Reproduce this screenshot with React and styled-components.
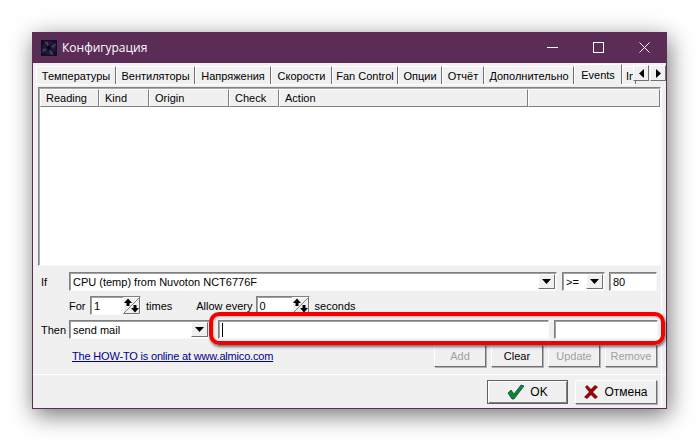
import styled, { createGlobalStyle } from 'styled-components';

const GlobalStyle = createGlobalStyle`
  html, body {
    margin: 0;
    padding: 0;
    background: #fff;
    overflow: hidden;
  }
  #root {
    width: 700px;
    height: 442px;
  }
  * {
    box-sizing: border-box;
  }
`;

const Page = styled.div`
  width: 700px;
  height: 442px;
  padding: 32px 33px 33px 32px;
  font-family: 'Liberation Sans', Arial, sans-serif;
  font-size: 11px;
  color: #000;
`;

const Window = styled.div`
  position: relative;
  width: 635px;
  height: 377px;
  background: #f0f0f0;
  border: 1px solid #5a2c56;
  border-top: none;
  box-shadow: 2px 6px 22px rgba(0, 0, 0, 0.55);
  display: flex;
  flex-direction: column;
`;

const TitleBar = styled.div`
  height: 31px;
  margin: 0 -1px;
  background: #5a2c56;
  color: #fff;
  display: flex;
  align-items: center;
  padding-left: 9px;
  flex: none;
`;

const TitleText = styled.span`
  font-family: 'Open Sans', sans-serif;
  font-size: 12px;
  margin-left: 5px;
  flex: 1;
`;

const CaptionButton = styled.div`
  width: 46px;
  height: 31px;
  display: flex;
  align-items: center;
  justify-content: center;
`;

const TabStrip = styled.div`
  position: relative;
  height: 23px;
  margin-top: 1px;
  padding: 2px 0 0 3px;
  display: flex;
  flex: none;
  overflow: hidden;
`;

const Tab = styled.div`
  flex: none;
  width: ${(p) => p.$w}px;
  height: ${(p) => (p.$active ? 20 : 18)}px;
  margin-top: ${(p) => (p.$active ? -2 : 0)}px;
  padding-left: ${(p) => (p.$clipped ? 3 : 0)}px;
  display: flex;
  align-items: center;
  justify-content: ${(p) => (p.$clipped ? 'flex-start' : 'center')};
  white-space: nowrap;
  overflow: hidden;
  background: #f0f0f0;
  border-left: 1px solid #fff;
  border-top: 1px solid #fff;
  border-right: 1px solid #707070;
  box-shadow: ${(p) => (p.$active ? 'none' : '0 1px 0 #fff')};
`;

const ScrollPair = styled.div`
  position: absolute;
  right: 0;
  top: 1px;
  display: flex;
  gap: 1px;
`;

const ScrollButton = styled.div`
  width: 16px;
  height: 16px;
  background: #f0f0f0;
  border: 1px solid;
  border-color: #fff #707070 #707070 #fff;
  display: flex;
  align-items: center;
  justify-content: center;
`;

const Frame = styled.div`
  flex: 1;
  margin: 0 4px 0 5px;
  display: flex;
  flex-direction: column;
  min-height: 0;
  border-right: 1px solid #fff;
`;

const ListBox = styled.div`
  height: 179px;
  flex: none;
  background: #fff;
  border: 1px solid;
  border-color: #808080 #f8f8f8 #f8f8f8 #808080;
  box-shadow: inset 1px 1px 0 #a8a8a8;
  display: flex;
  flex-direction: column;
`;

const HeaderRow = styled.div`
  display: flex;
  height: 19px;
  padding: 1px 0 0 1px;
  flex: none;
`;

const HeaderCell = styled.div`
  flex: ${(p) => (p.$w ? `0 0 ${p.$w}px` : '1')};
  height: 18px;
  background: #f0f0f0;
  border: 1px solid;
  border-color: #fff #808080 #808080 #fff;
  padding-left: 5px;
  line-height: 16px;
`;

const Form = styled.div`
  flex: 1;
  display: flex;
  flex-direction: column;
  padding: 6px 4px 0 3px;
  min-height: 0;
`;

const Row = styled.div`
  display: flex;
  align-items: center;
  height: ${(p) => p.$h || 19}px;
  margin-top: ${(p) => p.$mt || 0}px;
  padding-left: ${(p) => p.$pl || 0}px;
  flex: none;
`;

const Label = styled.span`
  flex: none;
  width: ${(p) => (p.$w ? `${p.$w}px` : 'auto')};
  margin-left: ${(p) => p.$ml || 0}px;
  white-space: nowrap;
`;

const Field = styled.div`
  flex: none;
  width: ${(p) => p.$w}px;
  height: 19px;
  margin-left: ${(p) => p.$ml || 0}px;
  background: #fff;
  border: 1px solid;
  border-color: #808080 #f8f8f8 #f8f8f8 #808080;
  box-shadow: inset 1px 1px 0 #a0a0a0;
  padding-left: 3px;
  display: flex;
  align-items: center;
  justify-content: space-between;
  white-space: nowrap;
`;

const Arrow = styled.div`
  flex: none;
  width: 17px;
  height: 15px;
  margin-right: 1px;
  background: #f0f0f0;
  border: 1px solid;
  border-color: #fff #707070 #707070 #fff;
  display: flex;
  align-items: center;
  justify-content: center;
`;

const Spin = styled.svg`
  flex: none;
  display: block;
`;

const Caret = styled.span`
  width: 1px;
  height: 14px;
  background: #000;
`;

const Link = styled.a`
  color: #00008b;
  text-decoration: underline;
  letter-spacing: -0.18px;
  margin-left: 31px;
  flex: 1;
  white-space: nowrap;
`;

const ActionButton = styled.div`
  flex: none;
  width: 52px;
  height: 22px;
  margin-left: 5px;
  background: #f0f0f0;
  border: 1px solid;
  border-color: #fff #707070 #707070 #fff;
  box-shadow: 1px 1px 0 #b0b0b0;
  color: ${(p) => (p.disabled ? '#a0a0a0' : '#000')};
  display: flex;
  align-items: center;
  justify-content: center;
`;

const Footer = styled.div`
  height: 34px;
  flex: none;
  margin: 0 -5px 0 -5px;
  border-top: 1px solid #fff;
  padding: 5px 9px 0 0;
  display: flex;
  justify-content: flex-end;
  gap: 7px;
`;

const DialogButton = styled.div`
  width: ${(p) => p.$w}px;
  height: 24px;
  background: #f0f0f0;
  border: 1px solid;
  border-color: ${(p) => (p.$default ? '#606060' : '#fff #707070 #707070 #fff')};
  box-shadow: ${(p) => (p.$default ? 'inset 1px 1px 0 #fff, inset -1px -1px 0 #808080' : '1px 1px 0 #b0b0b0')};
  display: flex;
  align-items: center;
  justify-content: center;
  gap: 6px;
  font-size: 12px;
`;

const Highlight = styled.div`
  position: absolute;
  left: 176px;
  top: 280px;
  width: 456px;
  height: 33px;
  border: 4px solid #f40000;
  border-radius: 10px;
  box-shadow: 1px 2px 3px rgba(0, 0, 0, 0.55), inset 1px 1px 2px rgba(0, 0, 0, 0.25);
  pointer-events: none;
`;

const tabs = [
  ['Температуры', 80],
  ['Вентиляторы', 79],
  ['Напряжения', 76],
  ['Скорости', 61],
  ['Fan Control', 66],
  ['Опции', 44],
  ['Отчёт', 42],
  ['Дополнительно', 90],
];

const columns = [
  ['Reading', 59],
  ['Kind', 50],
  ['Origin', 80],
  ['Check', 50],
  ['Action', 249],
  ['', 0],
];

const FanIcon = () => (
  <svg width="16" height="16" viewBox="0 0 16 16">
    <rect width="16" height="16" fill="#100e22" />
    <circle cx="8" cy="8" r="7" fill="#1c1a38" />
    <path d="M8 8 L3 1 L7 2 Z M8 8 L15 3 L14 7 Z M8 8 L13 15 L9 14 Z M8 8 L1 13 L2 9 Z" fill="#4a3c5c" />
    <circle cx="8" cy="8" r="2.5" fill="#0a0a1c" />
  </svg>
);

const SpinIcon = () => (
  <Spin width="17" height="17" viewBox="0 0 17 17">
    <rect width="17" height="17" fill="#f0f0f0" />
    <path d="M16.5 0.5 L0.5 16.5" stroke="#808080" />
    <path d="M0.5 16 V0.5 H16" stroke="#fff" fill="none" />
    <path d="M16.5 0.5 V16.5 H0.5" stroke="#707070" fill="none" />
    <path d="M5 1.5 L9 6 H6.5 V9 H3.5 V6 H1 Z" fill="#000" />
    <path d="M12 15.5 L8 11 H10.5 V8 H13.5 V11 H16 Z" fill="#000" />
  </Spin>
);

const DownArrow = () => (
  <svg width="9" height="5" viewBox="0 0 9 5">
    <path d="M0 0 H9 L4.5 5 Z" fill="#000" />
  </svg>
);

const ComboArrow = () => (
  <Arrow>
    <DownArrow />
  </Arrow>
);

export default function App() {
  return (
    <Page>
      <GlobalStyle />
      <Window>
        <TitleBar>
          <FanIcon />
          <TitleText>Конфигурация</TitleText>
          <CaptionButton>
            <svg width="11" height="11" viewBox="0 0 11 11">
              <path d="M0 5.5 H11" stroke="#fff" />
            </svg>
          </CaptionButton>
          <CaptionButton>
            <svg width="11" height="11" viewBox="0 0 11 11">
              <rect x="0.5" y="0.5" width="10" height="10" fill="none" stroke="#fff" />
            </svg>
          </CaptionButton>
          <CaptionButton>
            <svg width="11" height="11" viewBox="0 0 11 11">
              <path d="M0.5 0.5 L10.5 10.5 M10.5 0.5 L0.5 10.5" stroke="#fff" />
            </svg>
          </CaptionButton>
        </TitleBar>

        <TabStrip>
          {tabs.map(([name, w]) => (
            <Tab key={name} $w={w}>{name}</Tab>
          ))}
          <Tab $w={48} $active>Events</Tab>
          <Tab $w={14} $clipped>In</Tab>
          <ScrollPair>
            <ScrollButton>
              <svg width="5" height="9" viewBox="0 0 5 9"><path d="M5 0 V9 L0 4.5 Z" fill="#000" /></svg>
            </ScrollButton>
            <ScrollButton>
              <svg width="5" height="9" viewBox="0 0 5 9"><path d="M0 0 V9 L5 4.5 Z" fill="#000" /></svg>
            </ScrollButton>
          </ScrollPair>
        </TabStrip>

        <Frame>
          <ListBox>
            <HeaderRow>
              {columns.map(([name, w]) => (
                <HeaderCell key={name || 'rest'} $w={w}>{name}</HeaderCell>
              ))}
            </HeaderRow>
          </ListBox>

          <Form>
            <Row>
              <Label $w={28}>If</Label>
              <Field $w={488}>
                CPU (temp) from Nuvoton NCT6776F
                <ComboArrow />
              </Field>
              <Field $w={43} $ml={5}>
                &gt;=
                <ComboArrow />
              </Field>
              <Field $w={48} $ml={4}>80</Field>
            </Row>
            <Row $mt={5} $pl={28}>
              <Label $w={21}>For</Label>
              <Field $w={51}>
                1
                <SpinIcon />
              </Field>
              <Label $ml={5}>times</Label>
              <Label $ml={24}>Allow every</Label>
              <Field $w={54} $ml={3}>
                0
                <SpinIcon />
              </Field>
              <Label $ml={5}>seconds</Label>
            </Row>
            <Row $mt={5}>
              <Label $w={28}>Then</Label>
              <Field $w={141}>
                send mail
                <ComboArrow />
              </Field>
              <Field $w={331} $ml={8}>
                <Caret />
              </Field>
              <Field $w={104} $ml={5} />
            </Row>
            <Row $mt={6} $h={22}>
              <Link>The HOW-TO is online at www.almico.com</Link>
              <ActionButton disabled>Add</ActionButton>
              <ActionButton>Clear</ActionButton>
              <ActionButton disabled>Update</ActionButton>
              <ActionButton disabled>Remove</ActionButton>
            </Row>
          </Form>

          <Footer>
            <DialogButton $w={81} $default>
              <svg width="17" height="16" viewBox="0 0 17 16">
                <path d="M1 9 L4 6 L7 10 L14 1 L17 2 L7 15 H5 Z" fill="#0f8a1c" stroke="#00306a" strokeWidth="0.7" />
              </svg>
              OK
            </DialogButton>
            <DialogButton $w={82}>
              <svg width="14" height="14" viewBox="0 0 14 14">
                <path d="M1 2 L3 0 L7 4 L11 0 L14 2 L9 7 L14 12 L11 14 L7 10 L3 14 L0 12 L5 7 Z" fill="#8c0a0a" />
              </svg>
              Отмена
            </DialogButton>
          </Footer>
        </Frame>
        <Highlight />
      </Window>
    </Page>
  );
}
